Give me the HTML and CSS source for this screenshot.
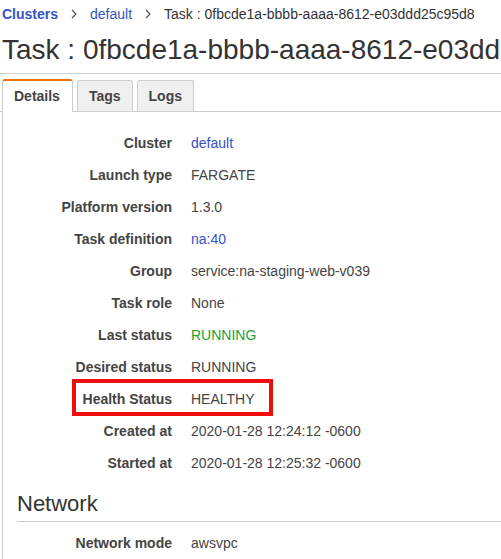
FILE: index.html
```
<!DOCTYPE html>
<html>
<head>
<meta charset="utf-8">
<link rel="stylesheet" href="styles.css">
</head>
<body>
<div class="breadcrumb">
  <a class="crumb-link crumb-bold">Clusters</a>
  <svg class="sep" width="6" height="10" viewBox="0 0 6 10"><polyline points="1,1 5,5 1,9" fill="none" stroke="#555" stroke-width="1.2"/></svg>
  <a class="crumb-link">default</a>
  <svg class="sep" width="6" height="10" viewBox="0 0 6 10"><polyline points="1,1 5,5 1,9" fill="none" stroke="#555" stroke-width="1.2"/></svg>
  <span class="crumb-current">Task : 0fbcde1a-bbbb-aaaa-8612-e03ddd25c95d8</span>
</div>
<h1 class="title">Task : 0fbcde1a-bbbb-aaaa-8612-e03ddd25c95d8</h1>
<div class="tabs">
  <div class="tab active">Details</div>
  <div class="tab">Tags</div>
  <div class="tab">Logs</div>
</div>
<div class="panel">
  <div class="rows">
    <div class="row"><div class="label">Cluster</div><div class="value"><a class="link">default</a></div></div>
    <div class="row"><div class="label">Launch type</div><div class="value">FARGATE</div></div>
    <div class="row"><div class="label">Platform version</div><div class="value">1.3.0</div></div>
    <div class="row"><div class="label">Task definition</div><div class="value"><a class="link">na:40</a></div></div>
    <div class="row"><div class="label">Group</div><div class="value">service:na-staging-web-v039</div></div>
    <div class="row"><div class="label">Task role</div><div class="value">None</div></div>
    <div class="row"><div class="label">Last status</div><div class="value green">RUNNING</div></div>
    <div class="row"><div class="label">Desired status</div><div class="value">RUNNING</div></div>
    <div class="row row-hl"><div class="label">Health Status</div><div class="value">HEALTHY</div><div class="highlight"></div></div>
    <div class="row"><div class="label">Created at</div><div class="value">2020-01-28 12:24:12 -0600</div></div>
    <div class="row"><div class="label">Started at</div><div class="value">2020-01-28 12:25:32 -0600</div></div>
  </div>
  <h2 class="section">Network</h2>
  <div class="rows rows-net">
    <div class="row"><div class="label">Network mode</div><div class="value">awsvpc</div></div>
  </div>
</div>
</body>
</html>
```
FILE: styles.css
```
html, body {
  margin: 0;
  padding: 0;
  background: #fff;
  overflow: hidden;
}
body {
  font-family: "Liberation Sans", Arial, sans-serif;
  font-size: 14px;
  color: #444;
  width: 501px;
  height: 559px;
}
.breadcrumb {
  padding: 5px 2px 0;
  line-height: 18px;
  height: 18px;
  white-space: nowrap;
  display: flex;
  align-items: center;
}
.crumb-link {
  color: #3652c4;
  text-decoration: none;
}
.crumb-bold {
  font-weight: bold;
}
.sep {
  margin: 0 13px 0 13px;
  display: block;
}
.crumb-current {
  color: #333;
}
.title {
  margin: 11px 0 0;
  padding: 0 0 7px 2px;
  font-size: 28px;
  line-height: 32px;
  font-weight: normal;
  color: #333;
  white-space: nowrap;
  overflow: hidden;
  border-bottom: 1px solid #d0d0d0;
}
.tabs {
  margin-top: 5px;
  padding-left: 2px;
  display: flex;
  align-items: flex-end;
  gap: 4px;
  border-bottom: 1px solid #cccccc;
}
.tab {
  height: 30px;
  line-height: 30px;
  padding: 0 11px;
  border: 1px solid #cccccc;
  border-bottom: none;
  border-radius: 3px 3px 0 0;
  background: #f0f0f0;
  font-weight: bold;
  color: #444;
}
.tab.active {
  background: #fff;
  border-top: 2px solid #ec7211;
  height: 31px;
  line-height: 31px;
  margin-bottom: -1px;
  padding: 0 12px 0 11px;
}
.panel {
  margin-left: 2px;
  border-left: 1px solid #cccccc;
  padding-top: 15px;
  height: 440px;
}
.row {
  display: grid;
  grid-template-columns: 169px 1fr;
  column-gap: 19px;
  line-height: 32px;
  white-space: nowrap;
}
.label {
  text-align: right;
  font-weight: bold;
  color: #444;
}
.value {
  color: #444;
}
.link {
  color: #3652c4;
  text-decoration: none;
}
.green {
  color: #22a22f;
}
.row-hl {
  position: relative;
}
.highlight {
  position: absolute;
  left: 69px;
  top: -4px;
  width: 201px;
  height: 37px;
  border: 4px solid #f20d0d;
  box-sizing: border-box;
}
.section {
  margin: 12px 0 0 14px;
  padding: 0 0 4px;
  font-size: 22px;
  line-height: 26px;
  font-weight: normal;
  color: #333;
  border-bottom: 1px solid #cccccc;
}
.rows-net {
  margin-top: 5px;
}
```
